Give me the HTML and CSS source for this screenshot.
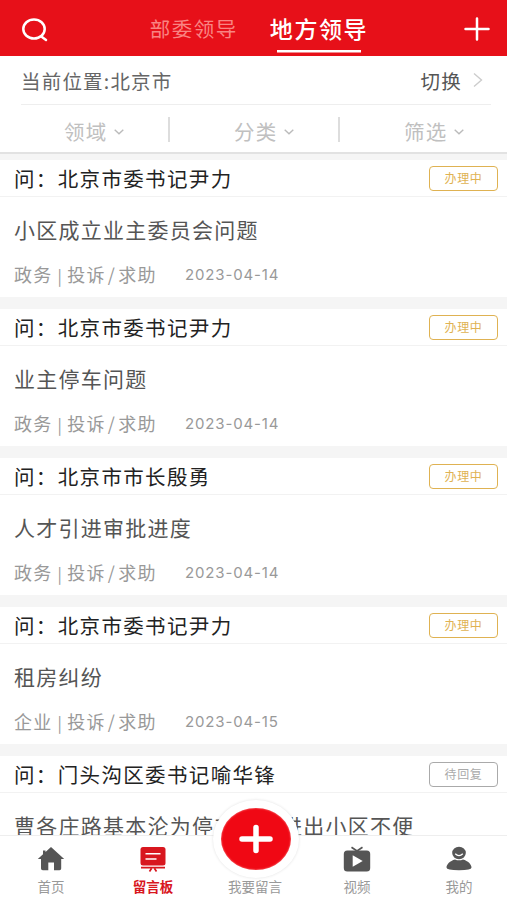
FILE: index.html
```html
<!DOCTYPE html>
<html lang="zh-CN">
<head>
  <meta charset="UTF-8" />
  <meta name="viewport" content="width=device-width, initial-scale=1.0" />
  <title>留言板</title>
  <link rel="stylesheet" href="styles.css">
</head>
<body>

<!-- ===== Top bar ===== -->
<header class="topbar">
  <svg class="search-icon" width="28" height="26" viewBox="0 0 28 26">
    <ellipse cx="13" cy="12" rx="10.7" ry="9.6"/>
    <path d="M21 20L25 23"/>
  </svg>
  <nav class="tabs">
    <a class="tab">部委领导</a>
    <a class="tab active">地方领导</a>
  </nav>
  <svg class="add-icon" width="26" height="24" viewBox="0 0 26 24">
    <path d="M1.5 12H24.5M13 1.5V22.5"/>
  </svg>
</header>

<!-- ===== Location ===== -->
<div class="location">
  <span>当前位置:北京市</span>
  <span class="switch">切换
    <svg width="10" height="16" viewBox="0 0 10 16"><path d="M1 1.5L8.5 8L1 14.5"/></svg>
  </span>
</div>

<!-- ===== Filters ===== -->
<div class="filters">
  <div class="filter">领域<svg width="10" height="6" viewBox="0 0 10 6"><path d="M.7 .8L5 4.8L9.3 .8"/></svg></div>
  <div class="filter">分类<svg width="10" height="6" viewBox="0 0 10 6"><path d="M.7 .8L5 4.8L9.3 .8"/></svg></div>
  <div class="filter">筛选<svg width="10" height="6" viewBox="0 0 10 6"><path d="M.7 .8L5 4.8L9.3 .8"/></svg></div>
</div>

<!-- ===== Messages ===== -->
<main class="list">
  <article class="card">
    <div class="card-head"><h3>问：北京市委书记尹力</h3><span class="status">办理中</span></div>
    <p class="subject">小区成立业主委员会问题</p>
    <div class="meta"><span>政务<i>|</i>投诉<b>/</b>求助</span><time>2023-04-14</time></div>
  </article>
  <article class="card">
    <div class="card-head"><h3>问：北京市委书记尹力</h3><span class="status">办理中</span></div>
    <p class="subject">业主停车问题</p>
    <div class="meta"><span>政务<i>|</i>投诉<b>/</b>求助</span><time>2023-04-14</time></div>
  </article>
  <article class="card">
    <div class="card-head"><h3>问：北京市市长殷勇</h3><span class="status">办理中</span></div>
    <p class="subject">人才引进审批进度</p>
    <div class="meta"><span>政务<i>|</i>投诉<b>/</b>求助</span><time>2023-04-14</time></div>
  </article>
  <article class="card">
    <div class="card-head"><h3>问：北京市委书记尹力</h3><span class="status">办理中</span></div>
    <p class="subject">租房纠纷</p>
    <div class="meta"><span>企业<i>|</i>投诉<b>/</b>求助</span><time>2023-04-15</time></div>
  </article>
  <article class="card">
    <div class="card-head"><h3>问：门头沟区委书记喻华锋</h3><span class="status waiting">待回复</span></div>
    <p class="subject">曹各庄路基本沦为停车场，进出小区不便</p>
  </article>
</main>

<!-- ===== Bottom bar ===== -->
<footer class="bottombar">
  <a class="nav">
    <svg width="28" height="28" viewBox="0 0 28 28">
      <path d="M14 2L27.2 14H24.2V23.5Q24.2 25.2 22.5 25.2H17V17.5H11.3V25.2H5.8Q4 25.2 4 23.5V14H.8L6 9.2V5.5H8.5V7Z"/>
    </svg>
    <span>首页</span>
  </a>
  <a class="nav active">
    <svg width="28" height="28" viewBox="0 0 28 28">
      <rect x="1.5" y="2" width="25" height="18.5" rx="2.5"/>
      <path class="cut" d="M6.5 8.8H21.5M6.5 14H17.5"/>
      <path class="line" d="M2 22.7H26M12.5 23.5L10.5 26.5M15.5 23.5L17.5 26.5"/>
    </svg>
    <span>留言板</span>
  </a>
  <a class="nav post">
    <div class="post-btn">
      <svg width="36" height="30" viewBox="0 0 36 30"><path d="M4 15H32M18 3.5V26.5"/></svg>
    </div>
    <span>我要留言</span>
  </a>
  <a class="nav">
    <svg width="28" height="28" viewBox="0 0 28 28">
      <rect x=".8" y="5.5" width="26.4" height="21" rx="3.5"/>
      <path class="line" d="M8.5 2.2L14 6L19.5 2.2"/>
      <path class="hole" d="M9.7 10.2L19.7 16L9.7 21.8Z"/>
    </svg>
    <span>视频</span>
  </a>
  <a class="nav">
    <svg width="28" height="28" viewBox="0 0 28 28">
      <ellipse cx="14" cy="8" rx="6.8" ry="6.2"/>
      <path d="M10 14.5Q14 16.2 18 14.5C23 15.8 26.5 19.5 26.5 22.5Q26.5 25.2 14 25.2T1.5 22.5C1.5 19.5 5 15.8 10 14.5Z"/>
      <path class="smile" d="M10.2 8.8Q14 12.6 17.8 8.8"/>
    </svg>
    <span>我的</span>
  </a>
</footer>

</body>
</html>
```
FILE: styles.css
```css
:root { --red:#e71019; --gold:#dfb252; --grey:#999; }
* { box-sizing:border-box; margin:0; padding:0; }
body {
  height:900px;overflow:hidden;background:#fff;color:#222;
  display:flex;flex-direction:column;
  font-family:"Noto Sans CJK SC",sans-serif;
}
svg{ fill:none;display:block; }

.topbar{
  height:56px;flex:none;background:var(--red);color:#fff;
  display:flex;justify-content:space-between;padding:0 17px 0 21px;
}
.search-icon,.add-icon{ stroke:#fff;stroke-width:2.5;stroke-linecap:round; }
.search-icon{ margin-top:17px; }
.add-icon{ margin-top:17px; }
.tabs{ display:flex;gap:32px;margin-left:5px; }
.tab{ font-size:20.5px;letter-spacing:1.5px;line-height:57px;color:#f98482; }
.tab.active{
  color:#fff;font-size:23px;font-weight:500;letter-spacing:1.6px;
  background:linear-gradient(#fff,#fff) 7px 50px/84px 2.5px no-repeat;
}

.location{
  height:49px;flex:none;margin:0 16px 0 21px;border-bottom:1px solid #eee;
  display:flex;justify-content:space-between;align-items:center;
  font-size:19.5px;letter-spacing:1.2px;color:#666;
}
.switch{ display:flex;align-items:center;gap:11px;padding-right:8px;color:#555; }
.switch svg{ stroke:#ccc;stroke-width:1.4; }

.filters{
  height:49px;flex:none;border-bottom:2px solid #e2e2e2;
  display:grid;grid-template-columns:170px 170px 170px;
}
.filter{
  display:flex;align-items:center;gap:6px;padding:4px 0 0 64px;
  font-size:20.5px;letter-spacing:1.3px;color:#c0c0c0;
  background:linear-gradient(#ddd,#ddd) right 12px/2px 25px no-repeat;
}
.filter:last-child{ background:none; }
.filter svg{ stroke:#bbb;stroke-width:1.4;margin-top:2px; }

.list{
  flex:1;min-height:0;overflow:hidden;background:#f5f5f5;
  padding-top:6px;display:flex;flex-direction:column;gap:12px;
}
.card{ height:137px;flex:none;background:#fff; }
.card-head{
  height:37px;border-bottom:1px solid #f2f2f2;padding:0 9px 0 14px;
  display:flex;justify-content:space-between;align-items:center;
}
.card h3{ font-size:20.5px;font-weight:400;letter-spacing:1.35px;line-height:35px; }
.status{
  width:69px;height:25px;border:1.5px solid var(--gold);border-radius:4px;
  color:var(--gold);font-size:12px;letter-spacing:.6px;line-height:22px;text-align:center;
}
.status.waiting{ border-color:#aaa;color:#aaa; }
.subject{ padding:17px 14px 0;font-size:21px;letter-spacing:1.25px;line-height:30px;color:#555;white-space:nowrap; }
.meta{
  display:flex;padding:17px 0 0 14px;color:var(--grey);
  font-size:18px;letter-spacing:1.3px;line-height:26px;
}
.meta span{ width:171px;white-space:nowrap; }
.meta i,.meta b{ font-style:normal;font-weight:400; }
.meta i{ font-size:16px;margin:0 4px 0 5px; }
.meta b{ margin:0 2px 0 2px; }
.meta time{ font-family:Inter,sans-serif;font-size:15px;letter-spacing:.85px;line-height:27px; }

.bottombar{
  height:65px;flex:none;position:relative;background:#fff;border-top:1px solid #eee;
  display:grid;grid-template-columns:repeat(5,102px);
}
.nav{
  display:flex;flex-direction:column;align-items:center;padding-top:9px;
  color:var(--grey);font-size:13.5px;line-height:18px;
}
.nav svg{ fill:#555;margin-bottom:4px; }
.nav .hole{ fill:#fff; }
.nav .line{ fill:none;stroke:#555;stroke-width:1.7; }
.nav .smile{ fill:none;stroke:#fff;stroke-width:1.3; }
.nav .cut{ stroke:#fff;stroke-width:1.6; }
.nav.active{ color:#d8171f;font-weight:700; }
.nav.active svg{ fill:#d8171f; }
.nav.active .line{ stroke:#d8171f; }

/* round button rises above the bar */
.post{ justify-content:flex-end;padding-bottom:5px; }
.post-btn{
  position:absolute;left:213px;top:-36px;width:86px;height:78px;
  border:8px solid #fff;border-radius:50%;background:#f00814;
  box-shadow:0 0 3px rgba(0,0,0,.12),inset 0 0 2px #ff9c9c;
  display:flex;align-items:center;justify-content:center;
}
.post-btn svg{ margin:0;stroke:#fff;stroke-width:5.5;stroke-linecap:round; }
```
